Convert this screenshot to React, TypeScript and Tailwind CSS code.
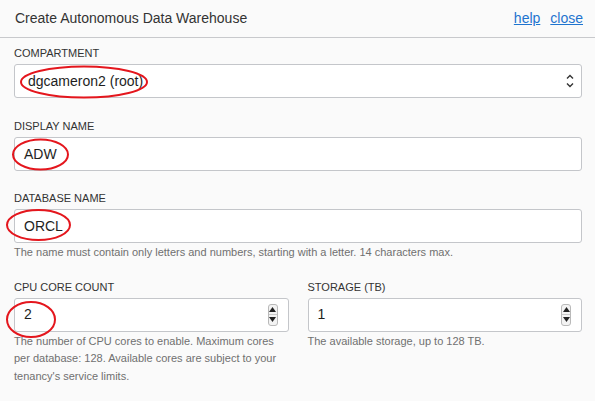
import React from "react";

const font = { fontFamily: '"Liberation Sans", Arial, sans-serif' };

function Spinner() {
  return (
    <div className="absolute right-[10px] top-1/2 -translate-y-1/2 flex h-[22px] w-[10px] flex-col rounded-[3px] border border-[#b9b9b9] bg-[#f3f3f3]">
      <div className="flex flex-1 items-center justify-center border-b border-[#c9c9c9]">
        <svg width="7" height="5" viewBox="0 0 7 5">
          <path d="M0 5 L3.5 0 L7 5 Z" fill="#222" />
        </svg>
      </div>
      <div className="flex flex-1 items-center justify-center">
        <svg width="7" height="5" viewBox="0 0 7 5">
          <path d="M0 0 L3.5 5 L7 0 Z" fill="#222" />
        </svg>
      </div>
    </div>
  );
}

function Label({ children }: { children: React.ReactNode }) {
  return <div className="mb-[4px] text-[11px] leading-[14px] text-[#333]">{children}</div>;
}

function Help({ children }: { children: React.ReactNode }) {
  return <div className="mt-[1px] text-[11px] leading-[17.5px] text-[#707070]">{children}</div>;
}

function Box({ value, spinner, select }: { value: string; spinner?: boolean; select?: boolean }) {
  return (
    <div
      className={`relative flex items-center rounded-[3px] border border-[#c4c6ca] bg-white text-[14px] text-[#1e1e1e] ${
        select ? "h-[34px] pl-[13px]" : "h-[34px] pl-[9px]"
      }`}
    >
      <span>{value}</span>
      {spinner && <Spinner />}
      {select && (
        <svg className="absolute right-[7px] top-[9px]" width="8" height="14" viewBox="0 0 8 14">
          <path d="M1 4.5 L4 1.5 L7 4.5" fill="none" stroke="#333" strokeWidth="1.4" />
          <path d="M1 9.5 L4 12.5 L7 9.5" fill="none" stroke="#333" strokeWidth="1.4" />
        </svg>
      )}
    </div>
  );
}

export default function App() {
  return (
    <div className="relative h-[401px] w-[595px] overflow-hidden bg-[#fafafa]" style={font}>
      <div className="flex h-[38px] items-center justify-between border-b border-[#c8c9cc] pl-[15px] pr-[12px]">
        <div className="text-[14px] text-[#333]">Create Autonomous Data Warehouse</div>
        <div className="flex gap-[10px] text-[14px] text-[#1f74cf]">
          <span className="underline">help</span>
          <span className="underline">close</span>
        </div>
      </div>

      <div className="flex flex-col pl-[14px] pr-[13px] pt-[8px]">
        <div>
          <Label>COMPARTMENT</Label>
          <Box value="dgcameron2 (root)" select />
        </div>
        <div className="mt-[21px]">
          <Label>DISPLAY NAME</Label>
          <Box value="ADW" />
        </div>
        <div className="mt-[20px]">
          <Label>DATABASE NAME</Label>
          <Box value="ORCL" />
          <Help>The name must contain only letters and numbers, starting with a letter. 14 characters max.</Help>
        </div>
        <div className="mt-[18px] grid grid-cols-2 gap-[19px]">
          <div>
            <Label>CPU CORE COUNT</Label>
            <Box value="2" spinner />
            <Help>
              The number of CPU cores to enable. Maximum cores per database: 128. Available cores are subject to your
              tenancy's service limits.
            </Help>
          </div>
          <div>
            <Label>STORAGE (TB)</Label>
            <Box value="1" spinner />
            <Help>The available storage, up to 128 TB.</Help>
          </div>
        </div>
      </div>

      <svg className="pointer-events-none absolute left-0 top-0" width="595" height="401">
        <ellipse cx="84" cy="82" rx="63" ry="15.5" fill="none" stroke="#e4161d" strokeWidth="2" />
        <ellipse cx="40.5" cy="154.5" rx="27.5" ry="15" fill="none" stroke="#e4161d" strokeWidth="2" />
        <ellipse cx="38.5" cy="225" rx="31.5" ry="15" fill="none" stroke="#e4161d" strokeWidth="2" />
        <ellipse cx="31" cy="319.5" rx="24" ry="17.5" fill="none" stroke="#e4161d" strokeWidth="2" />
      </svg>
    </div>
  );
}
